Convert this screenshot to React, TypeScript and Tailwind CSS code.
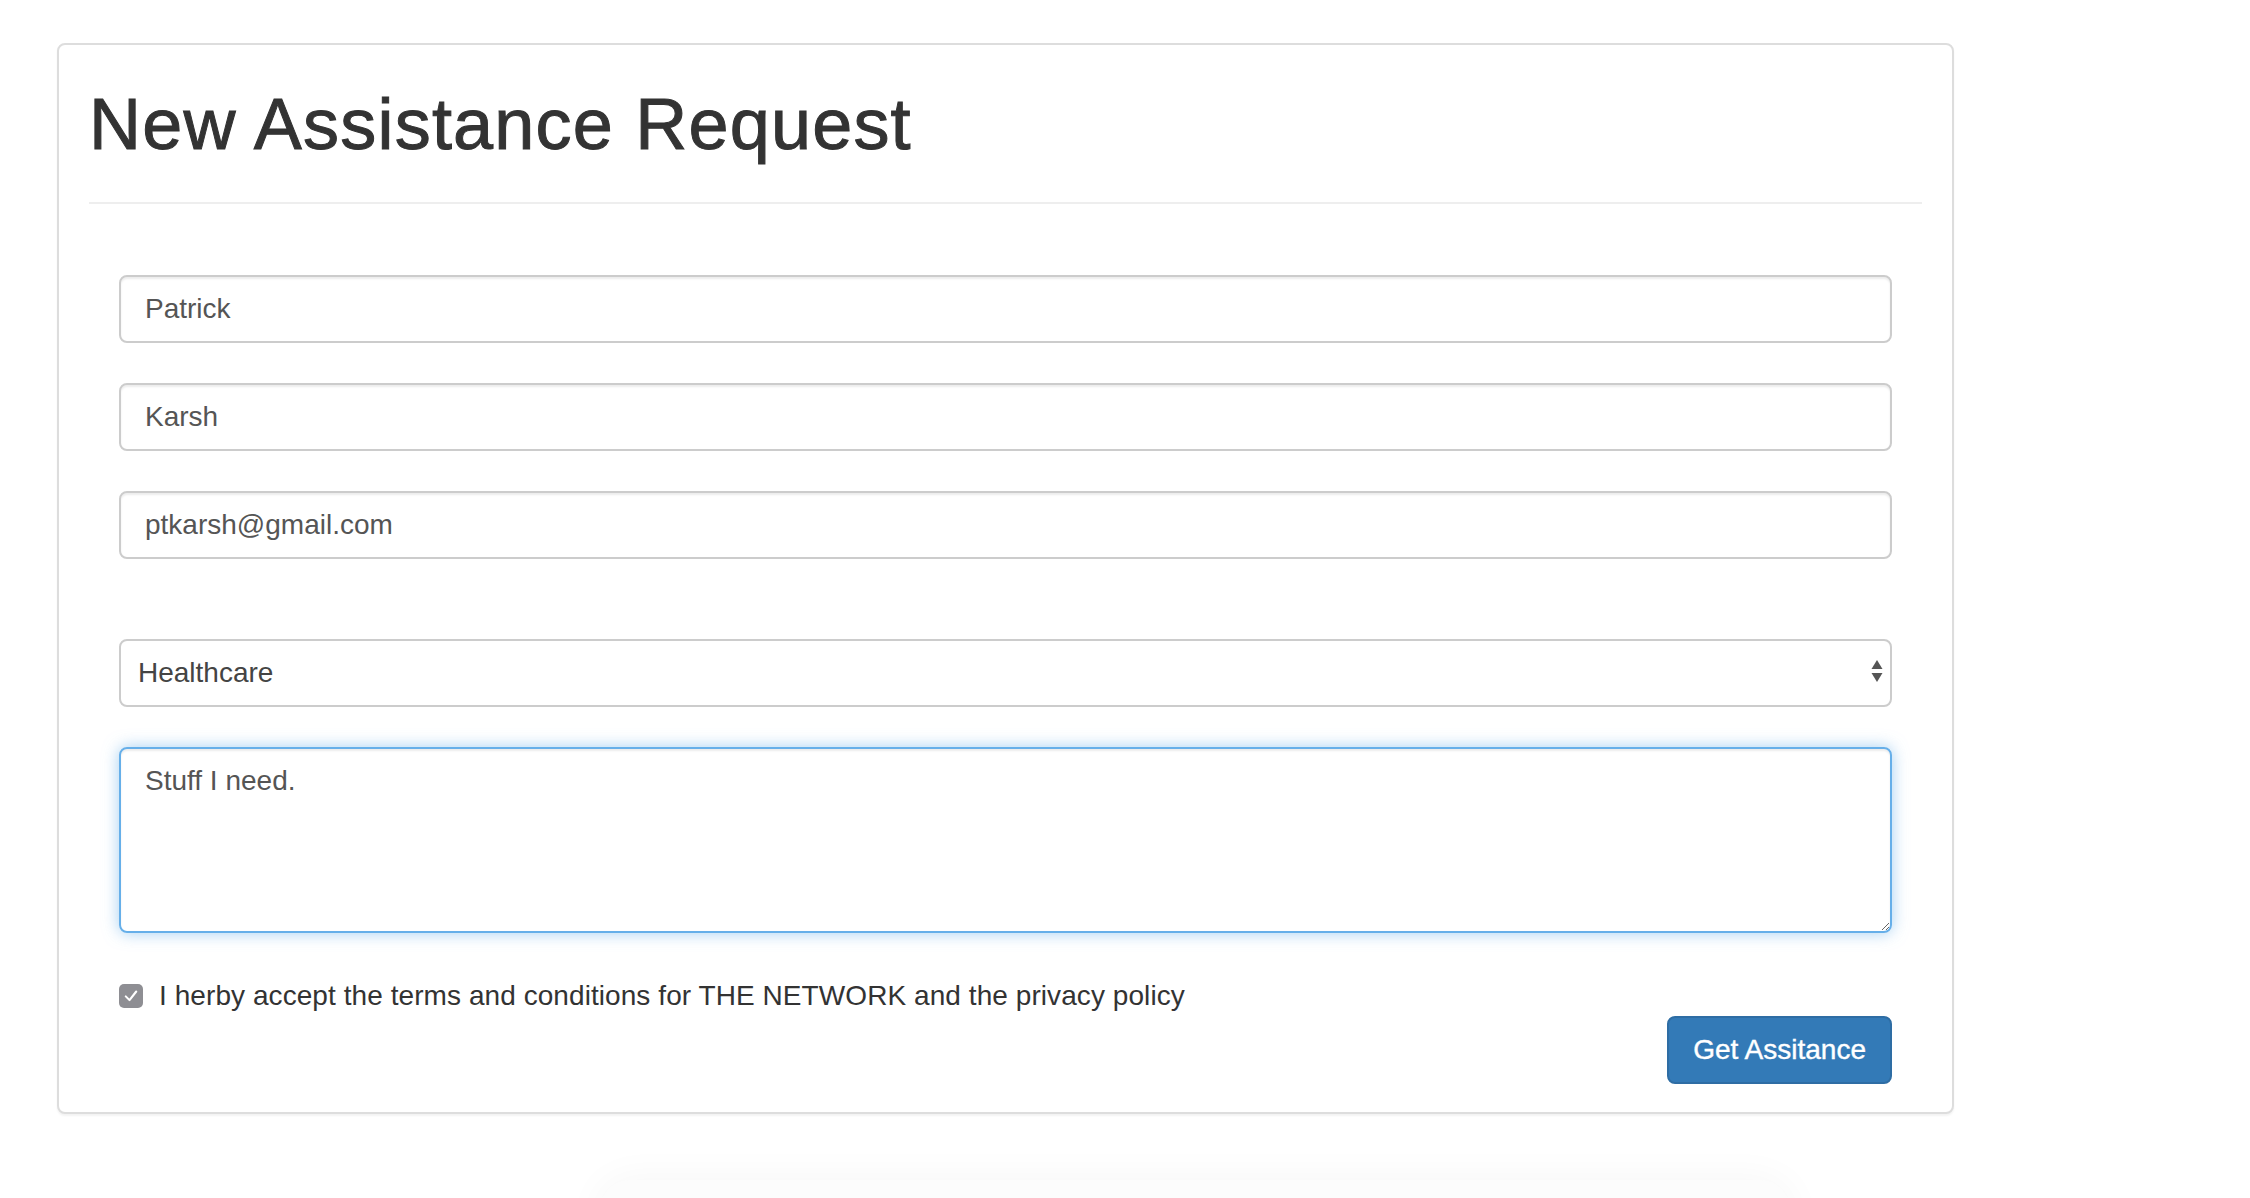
import { useState } from "react";

const inputClass =
  "block h-[68px] w-full rounded-[8px] border-2 border-[#ccc] bg-white px-[24px] text-[28px] text-[#555] shadow-[inset_0_2px_2px_rgba(0,0,0,0.075)] outline-none";

export default function App() {
  const [firstName, setFirstName] = useState("Patrick");
  const [lastName, setLastName] = useState("Karsh");
  const [email, setEmail] = useState("ptkarsh@gmail.com");
  const [category, setCategory] = useState("Healthcare");
  const [details, setDetails] = useState("Stuff I need.");
  const [accepted, setAccepted] = useState(true);

  return (
    <div className="h-screen overflow-hidden bg-white pl-[57px] pt-[43px] font-['Liberation_Sans',Arial,sans-serif] text-[#333]">
      <div className="w-[1897px] rounded-[8px] border-2 border-[#ddd] bg-white px-[30px] pb-[28px] shadow-[0_2px_2px_rgba(0,0,0,0.05)]">
        <div className="border-b-2 border-[#eee] pb-[38px] pt-[40px]">
          <h1 className="text-[72px] font-medium leading-[79px] tracking-[1.2px] text-[#333] [-webkit-text-stroke:1px_#333]">
            New Assistance Request
          </h1>
        </div>

        <form className="mt-[71px] px-[30px]" onSubmit={(event) => event.preventDefault()}>
          <div className="flex flex-col gap-[40px]">
            <input
              type="text"
              value={firstName}
              onChange={(event) => setFirstName(event.target.value)}
              className={inputClass}
            />
            <input
              type="text"
              value={lastName}
              onChange={(event) => setLastName(event.target.value)}
              className={inputClass}
            />
            <input
              type="email"
              value={email}
              onChange={(event) => setEmail(event.target.value)}
              className={inputClass}
            />
          </div>

          <div className="relative mt-[80px]">
            <select
              value={category}
              onChange={(event) => setCategory(event.target.value)}
              className="block h-[68px] w-full appearance-none rounded-[8px] border-2 border-[#ccc] bg-white pl-[17px] text-[28px] text-[#444] outline-none"
            >
              <option>Healthcare</option>
              <option>Housing</option>
              <option>Food</option>
              <option>Legal</option>
            </select>
            <svg
              viewBox="0 0 12 24"
              className="pointer-events-none absolute right-[9px] top-[20px] h-[24px] w-[12px]"
            >
              <path d="M6 1 L11.5 10 L0.5 10 Z" fill="#555" />
              <path d="M0.5 14 L11.5 14 L6 23 Z" fill="#555" />
            </svg>
          </div>

          <textarea
            value={details}
            onChange={(event) => setDetails(event.target.value)}
            className="mt-[40px] block h-[186px] w-full rounded-[8px] border-2 border-[#66afe9] px-[24px] py-[12px] text-[28px] leading-[40px] text-[#555] shadow-[inset_0_2px_2px_rgba(0,0,0,0.075),0_0_16px_rgba(102,175,233,0.6)] outline-none"
          />

          <label className="mt-[43px] flex h-[40px] cursor-pointer items-center text-[28px] text-[#333]">
            <span
              onClick={() => setAccepted(!accepted)}
              className="flex h-[24px] w-[24px] items-center justify-center rounded-[5px] bg-[#8e8e93]"
            >
              {accepted ? (
                <svg viewBox="0 0 24 24" className="h-[18px] w-[18px]">
                  <path
                    d="M5 12.5 L10 17.5 L19 6"
                    fill="none"
                    stroke="#fff"
                    strokeWidth="2.8"
                    strokeLinecap="round"
                    strokeLinejoin="round"
                  />
                </svg>
              ) : null}
            </span>
            <span className="ml-[16px] tracking-[0.07px]">
              I herby accept the terms and conditions for THE NETWORK and the privacy policy
            </span>
          </label>

          <div className="flex justify-end">
            <button
              type="submit"
              className="h-[68px] rounded-[8px] border-2 border-[#2e6da4] bg-[#337ab7] px-[24px] text-[28px] text-white [-webkit-text-stroke:0.4px_#fff]"
            >
              Get Assitance
            </button>
          </div>
        </form>
      </div>

      <div className="ml-[543px] mt-[66px] h-[60px] w-[1190px] rounded-t-[30px] bg-[#fcfcfc] shadow-[0_0_40px_rgba(0,0,0,0.045)]" />
    </div>
  );
}
